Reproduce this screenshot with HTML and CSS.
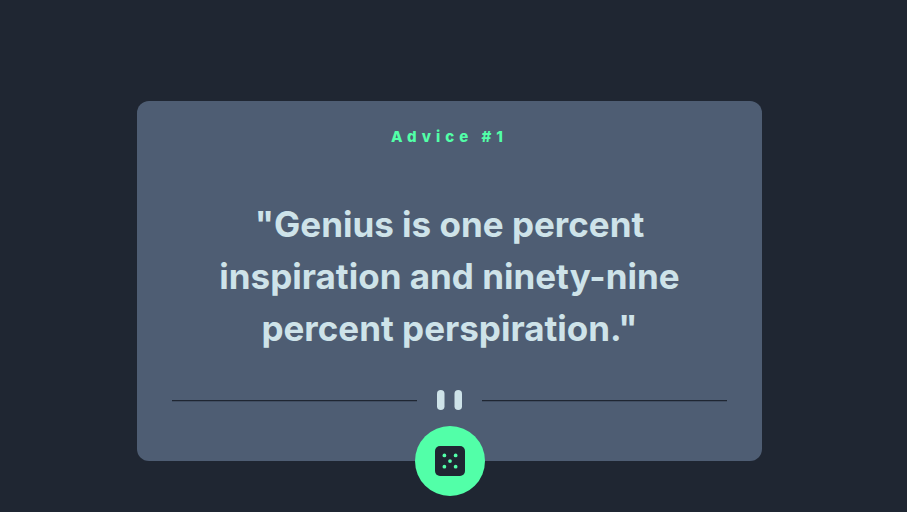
FILE: index.html
```html
<!DOCTYPE html>
<html lang="en">
<head>
<meta charset="utf-8">
<meta name="viewport" content="width=device-width, initial-scale=1">
<title>Advice generator</title>
<link rel="stylesheet" href="styles.css">
</head>
<body>
<main class="page">
  <article class="card">
    <h1 class="title">Advice #1</h1>
    <p class="quote">"Genius is one percent inspiration and ninety-nine percent perspiration."</p>
    <svg class="divider" viewBox="0 0 444 16" aria-hidden="true">
      <path fill="#1f2632" d="M0 8h196v1H0zM248 8h196v1H248z"/>
      <g fill="#cee3e9"><rect x="212" width="6" height="16" rx="3"/><rect x="226" width="6" height="16" rx="3"/></g>
    </svg>
    <button class="dice" type="button" aria-label="New advice">
      <svg class="dice-icon" viewBox="0 0 24 24" aria-hidden="true">
        <rect width="24" height="24" rx="4" fill="#1f2632"/>
        <g fill="#52ffa8"><circle cx="7.5" cy="7.5" r="1.5"/><circle cx="16.5" cy="7.5" r="1.5"/><circle cx="12" cy="12" r="1.5"/><circle cx="7.5" cy="16.5" r="1.5"/><circle cx="16.5" cy="16.5" r="1.5"/></g>
      </svg>
    </button>
  </article>
</main>
</body>
</html>
```
FILE: styles.css
```css
* { box-sizing: border-box; }
body {
  margin: 0;
  background: #1f2632;
  font-family: Inter, "Liberation Sans", sans-serif;
}
.page {
  display: flex;
  justify-content: center;
  align-items: flex-start;
  min-height: 100vh;
  padding: 101px 24px 48px 16px;
}
.card {
  display: flex;
  flex-direction: column;
  align-items: center;
  width: 100%;
  max-width: 625px;
  padding: 24px 35px 0;
  border-radius: 12px;
  background: #4e5d73;
  text-align: center;
}
.title {
  margin: 0;
  color: #52ffa8;
  font-size: 15px;
  line-height: 24px;
  font-weight: 800;
  letter-spacing: 5px;
}
.quote {
  max-width: 500px;
  margin: 49px 0 0;
  color: #cee3e9;
  font-size: 35px;
  line-height: 52px;
  font-weight: 700;
}
.divider {
  display: block;
  width: 100%;
  margin-top: 36px;
}
.dice {
  display: flex;
  align-items: center;
  justify-content: center;
  width: 70px;
  height: 70px;
  margin: 16px 0 -35px;
  padding: 0;
  border: 0;
  border-radius: 50%;
  background: #52ffa8;
  cursor: pointer;
}
.dice-icon {
  width: 30px;
  height: 30px;
}
```
